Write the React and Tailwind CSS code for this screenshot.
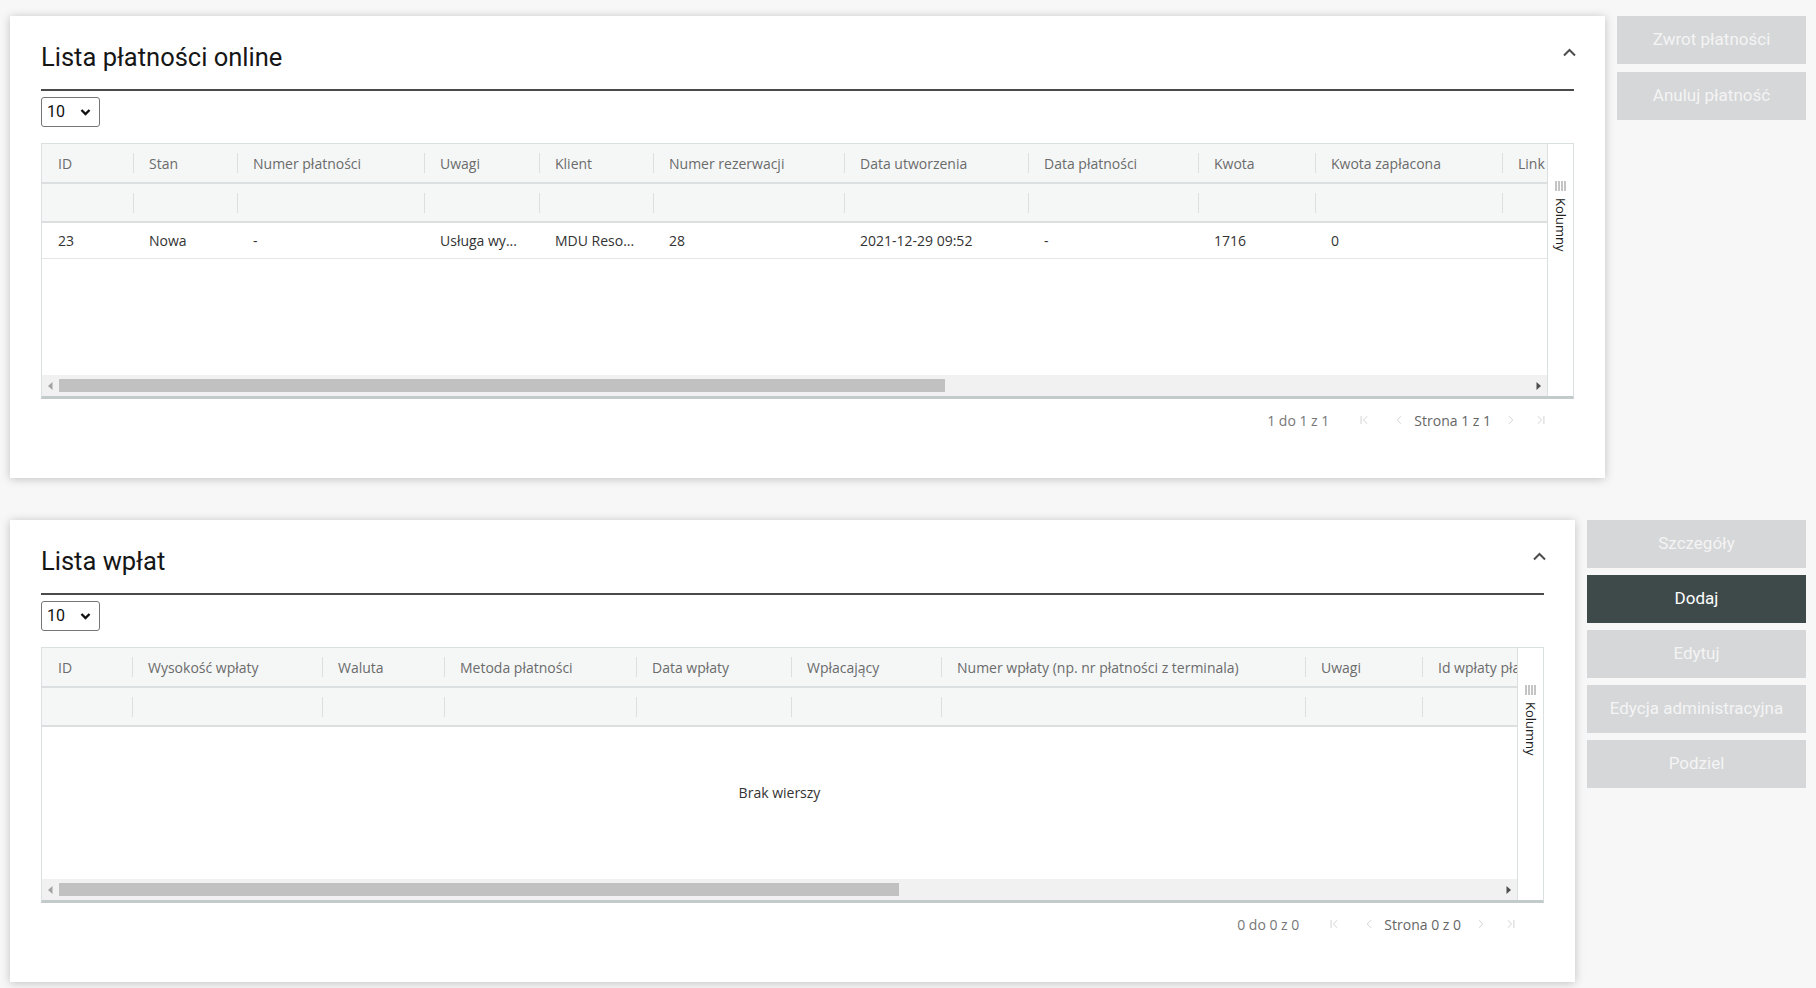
import React from 'react';
import { ChevronFirst, ChevronLeft, ChevronRight, ChevronLast } from 'lucide-react';

const onlineColumns = [
  { key: 'id', label: 'ID', w: 'w-[91px]' },
  { key: 'stan', label: 'Stan', w: 'w-[104px]' },
  { key: 'numer', label: 'Numer płatności', w: 'w-[187px]' },
  { key: 'uwagi', label: 'Uwagi', w: 'w-[115px]' },
  { key: 'klient', label: 'Klient', w: 'w-[114px]' },
  { key: 'rezerwacja', label: 'Numer rezerwacji', w: 'w-[191px]' },
  { key: 'utworzenie', label: 'Data utworzenia', w: 'w-[184px]' },
  { key: 'platnosc', label: 'Data płatności', w: 'w-[170px]' },
  { key: 'kwota', label: 'Kwota', w: 'w-[117px]' },
  { key: 'zaplacona', label: 'Kwota zapłacona', w: 'w-[187px]' },
  { key: 'link', label: 'Link', w: 'w-[180px]' },
  { key: 'waluta', label: 'Waluta', w: 'w-[140px]' },
];

const onlineRows = [
  {
    id: '23',
    stan: 'Nowa',
    numer: '-',
    uwagi: 'Usługa wy...',
    klient: 'MDU Reso...',
    rezerwacja: '28',
    utworzenie: '2021-12-29 09:52',
    platnosc: '-',
    kwota: '1716',
    zaplacona: '0',
    link: '',
    waluta: '',
  },
];

const depositColumns = [
  { key: 'id', label: 'ID', w: 'w-[90px]' },
  { key: 'kwota', label: 'Wysokość wpłaty', w: 'w-[190px]' },
  { key: 'waluta', label: 'Waluta', w: 'w-[122px]' },
  { key: 'metoda', label: 'Metoda płatności', w: 'w-[192px]' },
  { key: 'data', label: 'Data wpłaty', w: 'w-[155px]' },
  { key: 'wplacajacy', label: 'Wpłacający', w: 'w-[150px]' },
  { key: 'numer', label: 'Numer wpłaty (np. nr płatności z terminala)', w: 'w-[364px]' },
  { key: 'uwagi', label: 'Uwagi', w: 'w-[117px]' },
  { key: 'idp', label: 'Id wpłaty płatności', w: 'w-[200px]' },
];

const ChevronUpIcon = () => (
  <svg width="15" height="10" viewBox="0 0 15 10" className="mt-[6px] mr-[-3px] shrink-0">
    <polyline points="2,8.5 7.5,3 13,8.5" fill="none" stroke="#4d4d4d" strokeWidth="2" />
  </svg>
);

const PageSizeSelect = () => (
  <div className="mt-[6px] h-[30px] w-[59px] border border-[#767676] rounded-[3px] flex items-center justify-between pl-[5px] pr-[8px] font-['Roboto',sans-serif] text-[16px] text-[#111]">
    <span>10</span>
    <svg width="11" height="8" viewBox="0 0 11 8">
      <polyline points="1.5,2 5.5,6 9.5,2" fill="none" stroke="#111" strokeWidth="2.4" />
    </svg>
  </div>
);

const HeaderCells = ({ columns, withLabels }) =>
  columns.map((col, i) => (
    <div key={col.key} className={`${col.w} shrink-0 flex items-center h-full`}>
      {i > 0 && <div className="w-px h-[20px] bg-[#dcdfdf]" />}
      <span className={`${i > 0 ? 'pl-[15px]' : 'pl-[16px]'} whitespace-nowrap`}>
        {withLabels ? col.label : ''}
      </span>
    </div>
  ));

const ScrollBar = ({ thumb }) => (
  <div className="h-[21px] bg-[#f1f1f1] flex items-center shrink-0">
    <div className="w-[17px] h-full flex items-center justify-center">
      <svg width="5" height="8" viewBox="0 0 5 8">
        <polygon points="4.5,0 0,4 4.5,8" fill="#a3a3a3" />
      </svg>
    </div>
    <div className="h-[13px] bg-[#c1c1c1]" style={{ width: thumb }} />
    <div className="flex-1" />
    <div className="w-[17px] h-full flex items-center justify-center">
      <svg width="5" height="8" viewBox="0 0 5 8">
        <polygon points="0.5,0 5,4 0.5,8" fill="#505050" />
      </svg>
    </div>
  </div>
);

const ColumnsToggle = () => (
  <div className="w-[26px] shrink-0 border-l border-[#dadfdf] bg-white flex flex-col items-center pt-[37px]">
    <svg width="11" height="10" viewBox="0 0 11 10">
      <line x1="1" y1="0" x2="1" y2="10" stroke="#8a8a8a" strokeWidth="1" />
      <line x1="4" y1="0" x2="4" y2="10" stroke="#8a8a8a" strokeWidth="1" />
      <line x1="7" y1="0" x2="7" y2="10" stroke="#8a8a8a" strokeWidth="1" />
      <line x1="10" y1="0" x2="10" y2="10" stroke="#8a8a8a" strokeWidth="1" />
    </svg>
    <span className="mt-[7px] [writing-mode:vertical-rl] text-[13px] leading-[16px] text-[#222]">Kolumny</span>
  </div>
);

const Pagination = ({ range, page }) => (
  <div className="h-[42px] flex items-center justify-end pr-[26px] text-[14px] text-[#777]">
    <span>{range}</span>
    <ChevronFirst size={14} strokeWidth={1.5} color="#cccccc" className="ml-[28px]" />
    <ChevronLeft size={14} strokeWidth={1.5} color="#cccccc" className="ml-[21px]" />
    <span className="ml-[8px] text-[#666]">{page}</span>
    <ChevronRight size={14} strokeWidth={1.5} color="#cccccc" className="ml-[13px]" />
    <ChevronLast size={14} strokeWidth={1.5} color="#cccccc" className="ml-[16px]" />
  </div>
);

const TableCard = ({ title, columns, rows, thumb, range, page }) => (
  <div className="flex-1 min-w-0 bg-white shadow-[0_1px_9px_rgba(0,0,0,0.22)] px-[31px] pt-[25px] pb-[37px] font-['Open_Sans',sans-serif]">
    <div className="flex justify-between items-start border-b-2 border-[#4a4a4a] pb-[16px]">
      <h2 className="font-['Roboto',sans-serif] text-[25.5px] leading-[32px] font-normal text-[#161616]">{title}</h2>
      <ChevronUpIcon />
    </div>

    <PageSizeSelect />

    <div className="mt-[16px] flex border border-[#dadfdf] border-b-[3px] border-b-[#c3caca]">
      <div className="flex-1 min-w-0 flex flex-col overflow-hidden">
        <div className="h-[40px] shrink-0 flex bg-[#f5f7f7] border-b-2 border-[#dcdfdf] text-[14px] text-[#6b6b6b]">
          <HeaderCells columns={columns} withLabels />
        </div>
        <div className="h-[39px] shrink-0 flex bg-[#f5f7f7] border-b-2 border-[#dcdfdf]">
          <HeaderCells columns={columns} />
        </div>
        <div className="h-[152px] shrink-0 flex flex-col">
          {rows.length > 0 ? (
            rows.map((row) => (
              <div key={row.id} className="h-[36px] shrink-0 flex items-center border-b border-[#e6e6e6] text-[14px] text-[#333]">
                {columns.map((col) => (
                  <div key={col.key} className={`${col.w} shrink-0 pl-[16px] whitespace-nowrap`}>
                    {row[col.key]}
                  </div>
                ))}
              </div>
            ))
          ) : (
            <div className="flex-1 flex items-center justify-center pb-[22px] text-[14px] text-[#333]">Brak wierszy</div>
          )}
        </div>
        <ScrollBar thumb={thumb} />
      </div>
      <ColumnsToggle />
    </div>

    <Pagination range={range} page={page} />
  </div>
);

const SideButton = ({ label, active }) => (
  <button
    className={`h-[48px] w-full font-['Roboto',sans-serif] text-[17px] ${
      active ? 'bg-[#3e4a4a] text-white' : 'bg-[#d6d7d9] text-[#f4f4f4]'
    }`}
  >
    {label}
  </button>
);

const App = () => {
  return (
    <div className="min-h-screen bg-[#f7f7f7] pt-[16px] px-[10px] flex flex-col gap-[42px]">
      <section className="flex items-start gap-[12px]">
        <TableCard
          title="Lista płatności online"
          columns={onlineColumns}
          rows={onlineRows}
          thumb={886}
          range="1 do 1 z 1"
          page="Strona 1 z 1"
        />
        <div className="w-[189px] shrink-0 flex flex-col gap-[8px]">
          <SideButton label="Zwrot płatności" />
          <SideButton label="Anuluj płatność" />
        </div>
      </section>

      <section className="flex items-start gap-[12px]">
        <TableCard
          title="Lista wpłat"
          columns={depositColumns}
          rows={[]}
          thumb={840}
          range="0 do 0 z 0"
          page="Strona 0 z 0"
        />
        <div className="w-[219px] shrink-0 flex flex-col gap-[7px]">
          <SideButton label="Szczegóły" />
          <SideButton label="Dodaj" active />
          <SideButton label="Edytuj" />
          <SideButton label="Edycja administracyjna" />
          <SideButton label="Podziel" />
        </div>
      </section>
    </div>
  );
};

export default App;
